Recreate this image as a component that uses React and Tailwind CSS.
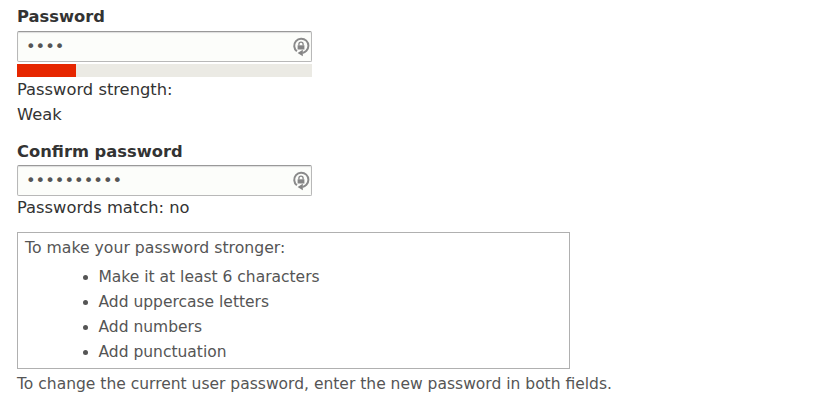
import React, { useState } from "react";

const tips = [
  "Make it at least 6 characters",
  "Add uppercase letters",
  "Add numbers",
  "Add punctuation",
];

function LockIcon() {
  return (
    <svg width="18" height="20" viewBox="0 0 18 20" className="shrink-0" fill="none">
      <path d="M4.9 14.3A7.1 7.1 0 1 1 14.2 13.9Q12.8 15.6 10.5 15.9" stroke="#8a8a8a" strokeWidth="2" />
      <path d="M10.8 12.8V19.2L5.6 16z" fill="#858585" />
      <rect x="5.6" y="8.3" width="6.8" height="4.2" fill="#858585" />
      <path d="M6.9 8.5V7.2a2.1 2.1 0 0 1 4.2 0v1.3" stroke="#858585" strokeWidth="1.3" />
    </svg>
  );
}

function PasswordField({ label, value, onChange }) {
  return (
    <div className="flex h-[31px] w-[295px] items-center rounded-[2px] border border-[#b8b8b8] border-t-[#999] bg-[#fcfdfa] pr-px pl-[8px] shadow-[inset_0_1px_1px_#ddd]">
      <input
        type="password"
        aria-label={label}
        value={value}
        onChange={(e) => onChange(e.target.value)}
        className="h-[25px] min-w-0 flex-1 text-[#555] outline-none"
      />
      <LockIcon />
    </div>
  );
}

export default function App() {
  const [password, setPassword] = useState("abcd");
  const [confirm, setConfirm] = useState("abcdefghij");

  return (
    <div className="h-[405px] overflow-hidden bg-white pt-[4px] pl-[17px] font-['DejaVu_Sans',sans-serif] text-[16.32px] leading-[25px] text-[#333]">
      <div className="h-[27px] font-bold">Password</div>
      <PasswordField label="Password" value={password} onChange={setPassword} />
      <div className="mt-[2px] h-[13px] w-[295px] bg-[#ebeae4]">
        <div className="h-full w-1/5 bg-[#e62600]" />
      </div>
      <div>Password strength:</div>
      <div>Weak</div>

      <div className="mt-[12px] h-[26px] font-bold">Confirm password</div>
      <PasswordField label="Confirm password" value={confirm} onChange={setConfirm} />
      <div className="-mt-px">Passwords match: no</div>

      <div className="mt-[12px] h-[137px] w-[553px] border border-[#b0b0b0] px-[7px] pt-[2px] text-[15.5px] text-[#555]">
        <div className="text-[15.7px]">To make your password stronger:</div>
        <ul className="mt-[5px] list-disc pl-[73.5px]">
          {tips.map((tip) => (
            <li key={tip}>{tip}</li>
          ))}
        </ul>
      </div>
      <div className="mt-[3px] text-[15.52px] text-[#555]">
        To change the current user password, enter the new password in both fields.
      </div>
    </div>
  );
}
